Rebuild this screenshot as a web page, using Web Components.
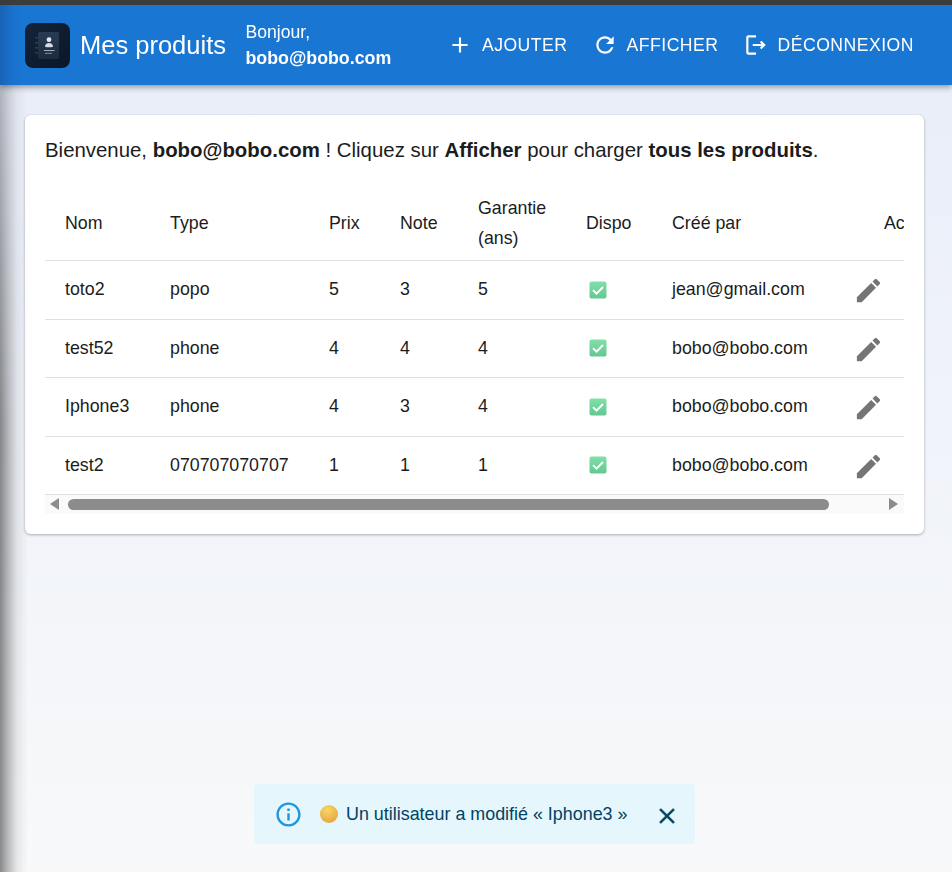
<!DOCTYPE html>
<html lang="fr">
<head>
<meta charset="utf-8">
<title>Mes produits</title>
<style>
  html, body { margin: 0; height: 100%; }
  body {
    overflow: hidden;
    font-family: "Liberation Sans", Arial, sans-serif;
    font-size: 17.6px;
    color: #1c1c1c;
    background: linear-gradient(180deg, #e8edf9 0%, #f8f9fa 100%);
  }
</style>
</head>
<body>
<side-shade></side-shade>
<app-bar>
  <nav-button icon="add">Ajouter</nav-button>
  <nav-button icon="refresh">Afficher</nav-button>
  <nav-button icon="logout">Déconnexion</nav-button>
</app-bar>
<page-main>
  <product-card>
    Bienvenue, <b>bobo@bobo.com</b> ! Cliquez sur <b>Afficher</b> pour charger <b>tous les produits</b>.
  </product-card>
</page-main>
<info-snackbar>Un utilisateur a modifié « Iphone3 »</info-snackbar>

<script>
const ICONS = {
  add: 'M19 13h-6v6h-2v-6H5v-2h6V5h2v6h6v2z',
  refresh: 'M17.65 6.35C16.2 4.9 14.21 4 12 4c-4.42 0-7.99 3.58-7.99 8s3.57 8 7.99 8c3.73 0 6.84-2.55 7.73-6h-2.08c-.82 2.33-3.04 4-5.65 4-3.31 0-6-2.69-6-6s2.69-6 6-6c1.66 0 3.14.69 4.22 1.78L13 11h7V4l-2.35 2.35z',
  logout: 'M17 8l-1.41 1.41L17.17 11H9v2h8.17l-1.58 1.58L17 16l4-4zM5 5h7V3H5c-1.1 0-2 .9-2 2v14c0 1.1.9 2 2 2h7v-2H5V5z',
  edit: 'M3 17.25V21h3.75L17.81 9.94l-3.75-3.75L3 17.25zM20.71 7.04c.39-.39.39-1.02 0-1.41l-2.34-2.34a.9959.9959 0 0 0-1.41 0l-1.83 1.83 3.75 3.75 1.83-1.83z',
  info: 'M11 7h2v2h-2zm0 4h2v6h-2zm1-9C6.48 2 2 6.48 2 12s4.48 10 10 10 10-4.48 10-10S17.52 2 12 2zm0 18c-4.41 0-8-3.59-8-8s3.59-8 8-8 8 3.59 8 8-3.59 8-8 8z',
  close: 'M19 6.41L17.59 5 12 10.59 6.41 5 5 6.41 10.59 12 5 17.59 6.41 19 12 13.41 17.59 19 19 17.59 13.41 12z'
};
const svgIcon = (name, size) =>
  `<svg width="${size}" height="${size}" viewBox="0 0 24 24" fill="currentColor"><path d="${ICONS[name]}"/></svg>`;

class SideShade extends HTMLElement {
  connectedCallback() {
    this.attachShadow({ mode: 'open' });
    this.shadowRoot.innerHTML = `
      <style>
        :host {
          position: fixed;
          top: 0;
          left: 0;
          bottom: 0;
          width: 28px;
          z-index: 5;
          pointer-events: none;
          background: linear-gradient(90deg, rgba(0,0,0,.45) 0, rgba(0,0,0,.25) 8px, rgba(0,0,0,.07) 17px, rgba(0,0,0,0) 28px);
          -webkit-mask-image: linear-gradient(180deg, rgba(0,0,0,.55) 85px, #000 420px);
          mask-image: linear-gradient(180deg, rgba(0,0,0,.55) 85px, #000 420px);
        }
      </style>`;
  }
}
customElements.define('side-shade', SideShade);

class AppBar extends HTMLElement {
  connectedCallback() {
    this.attachShadow({ mode: 'open' });
    this.shadowRoot.innerHTML = `
      <style>
        :host {
          display: block;
          position: relative;
          z-index: 10;
          border-top: 5px solid #3c3c3c;
          background: linear-gradient(90deg, #1763b4 0, #1970cb 10px, #1976d2 22px);
          color: #fff;
          box-shadow: 0 2px 4px -1px rgba(0,0,0,.2), 0 4px 5px rgba(0,0,0,.14), 0 1px 10px rgba(0,0,0,.12);
        }
        .bar {
          height: 80px;
          box-sizing: border-box;
          padding: 0 38px 0 25px;
          display: flex;
          align-items: center;
        }
        .logo { display: block; width: 45px; height: 45px; margin-top: 1px; }
        h1 {
          margin: 0 19.5px 0 10px;
          font-size: 25.5px;
          font-weight: 400;
          line-height: 32px;
        }
        .hello { font-size: 17.6px; line-height: 26px; margin-top: -1px; }
        .hello b { display: block; font-size: 17.8px; }
        .actions { margin-left: auto; display: flex; align-items: center; gap: 24px; }
      </style>
      <div class="bar">
        <svg class="logo" viewBox="0 0 45 45">
          <defs>
            <linearGradient id="lg" x1="0" y1="0" x2="1" y2="1">
              <stop offset="0" stop-color="#15243a"/>
              <stop offset="1" stop-color="#0b1727"/>
            </linearGradient>
            <linearGradient id="bk" x1="0" y1="0" x2="0" y2="1">
              <stop offset="0" stop-color="#2a3c54"/>
              <stop offset="1" stop-color="#1b2b40"/>
            </linearGradient>
          </defs>
          <rect width="45" height="45" rx="8" fill="url(#lg)"/>
          <rect x="13" y="9" width="21" height="27" rx="1.5" fill="url(#bk)"/>
          <g fill="#2c3c50"><rect x="10" y="14" width="3" height="1.500"/><rect x="10" y="19" width="3" height="1.500"/><rect x="10" y="24" width="3" height="1.500"/><rect x="10" y="29" width="3" height="1.500"/></g>
          <circle cx="24" cy="16.700" r="2.400" fill="#e2e7ee"/>
          <path d="M20 23.500c0-2.300 1.800-3.500 4-3.500s4 1.200 4 3.500c0 .5-1 .8-4 .8s-4-.3-4-.8z" fill="#d5dbe4"/>
          <rect x="19" y="27" width="10.500" height="1" fill="#a3afc0"/>
          <rect x="20" y="29.800" width="7" height="1" fill="#7e8da2"/>
        </svg>
        <h1>Mes produits</h1>
        <div class="hello">Bonjour,<b>bobo@bobo.com</b></div>
        <div class="actions"><slot></slot></div>
      </div>`;
  }
}
customElements.define('app-bar', AppBar);

class NavButton extends HTMLElement {
  connectedCallback() {
    this.attachShadow({ mode: 'open' });
    this.shadowRoot.innerHTML = `
      <style>
        :host {
          display: flex;
          align-items: center;
          gap: 9px;
          color: #fff;
          font-size: 17.6px;
          letter-spacing: .5px;
          text-transform: uppercase;
          line-height: 26px;
        }
        svg { display: block; }
      </style>
      ${svgIcon(this.getAttribute('icon'), 26)}<span><slot></slot></span>`;
  }
}
customElements.define('nav-button', NavButton);

class PageMain extends HTMLElement {
  connectedCallback() {
    this.attachShadow({ mode: 'open' });
    this.shadowRoot.innerHTML = `
      <style>
        :host { display: block; padding: 30px 28px 0 25px; }
      </style>
      <slot></slot>`;
  }
}
customElements.define('page-main', PageMain);

class ProductCard extends HTMLElement {
  connectedCallback() {
    this.attachShadow({ mode: 'open' });
    this.shadowRoot.innerHTML = `
      <style>
        :host {
          display: block;
          background: #fff;
          border-radius: 6px;
          padding: 20px;
          box-shadow: 0 1px 3px rgba(0,0,0,.3);
        }
        p { margin: 0 0 25px; font-size: 20.4px; line-height: 30px; }
      </style>
      <p><slot></slot></p>
      <product-table></product-table>
      <table-scrollbar></table-scrollbar>`;
  }
}
customElements.define('product-card', ProductCard);

const PRODUCTS = [
  ['toto2', 'popo', 5, 3, 5, 'jean@gmail.com'],
  ['test52', 'phone', 4, 4, 4, 'bobo@bobo.com'],
  ['Iphone3', 'phone', 4, 3, 4, 'bobo@bobo.com'],
  ['test2', '070707070707', 1, 1, 1, 'bobo@bobo.com']
];

class ProductTable extends HTMLElement {
  connectedCallback() {
    this.attachShadow({ mode: 'open' });
    const rows = PRODUCTS.map(p => `
      <tr>
        <td>${p[0]}</td><td>${p[1]}</td><td>${p[2]}</td><td>${p[3]}</td><td>${p[4]}</td>
        <td><svg class="ok" width="18" height="18" viewBox="0 0 18 18">
          <rect x=".5" y=".5" width="17" height="17" rx="2" fill="url(#okg)"/>
          <path d="M4 9.200l3.500 3.500 6.500-6.700" fill="none" stroke="#fff" stroke-width="1.900"/>
        </svg></td>
        <td>${p[5]}</td>
        <td class="act">${svgIcon('edit', 31)}</td>
      </tr>`).join('');
    this.shadowRoot.innerHTML = `
      <style>
        :host { display: block; overflow: hidden; }
        table {
          border-collapse: collapse;
          table-layout: fixed;
          width: 1000px;
          font-size: 17.8px;
        }
        th {
          font-weight: 400;
          text-align: left;
          height: 70px;
          line-height: 30px;
          padding: 0 20px 4px;
          box-sizing: border-box;
          border-bottom: 1px solid #e0e0e0;
        }
        td {
          height: 58px;
          padding: 0 20px;
          box-sizing: border-box;
          border-bottom: 1px solid #e0e0e0;
          white-space: nowrap;
        }
        tbody tr:nth-child(odd) td { height: 59px; }
        th.actions { padding-left: 52px; }
        td.act { padding: 0; color: #757575; }
        td.act svg { display: block; margin: 2px 0 0 21px; }
        .ok { display: block; margin: 0 0 0 2.500px; }
      </style>
      <svg width="0" height="0" style="position:absolute">
        <defs>
          <linearGradient id="okg" x1="0" y1="0" x2="0" y2="1">
            <stop offset="0" stop-color="#82dfa8"/>
            <stop offset="1" stop-color="#62c892"/>
          </linearGradient>
        </defs>
      </svg>
      <table>
        <colgroup>
          <col style="width:105px"><col style="width:159px"><col style="width:71px"><col style="width:78px">
          <col style="width:108px"><col style="width:86px"><col style="width:180px"><col style="width:213px">
        </colgroup>
        <thead><tr>
          <th>Nom</th><th>Type</th><th>Prix</th><th>Note</th><th>Garantie (ans)</th><th>Dispo</th><th>Créé par</th><th class="actions">Actions</th>
        </tr></thead>
        <tbody>${rows}</tbody>
      </table>`;
  }
}
customElements.define('product-table', ProductTable);

class TableScrollbar extends HTMLElement {
  connectedCallback() {
    this.attachShadow({ mode: 'open' });
    this.shadowRoot.innerHTML = `
      <style>
        :host {
          display: flex;
          align-items: center;
          height: 19px;
          padding: 0 6px 0 5px;
          background: #fafafa;
        }
        .arrow { width: 0; height: 0; border-top: 6px solid transparent; border-bottom: 6px solid transparent; }
        .left { border-right: 9px solid #8c8c8c; }
        .right { border-left: 9px solid #8c8c8c; margin-left: auto; }
        .thumb { width: 761px; height: 11px; margin-left: 9px; border-radius: 6px; background: #8c8c8c; }
      </style>
      <div class="arrow left"></div>
      <div class="thumb"></div>
      <div class="arrow right"></div>`;
  }
}
customElements.define('table-scrollbar', TableScrollbar);

class InfoSnackbar extends HTMLElement {
  connectedCallback() {
    this.attachShadow({ mode: 'open' });
    this.shadowRoot.innerHTML = `
      <style>
        :host {
          position: fixed;
          left: 254px;
          bottom: 28px;
          width: 441px;
          height: 60px;
          box-sizing: border-box;
          padding: 0 15px 0 20px;
          display: flex;
          align-items: center;
          border-radius: 4px;
          background: #e5f6fd;
          color: #014361;
          font-size: 17.9px;
        }
        .info { color: #1e96dc; display: block; margin-top: 1px; }
        .info svg { display: block; }
        .coin {
          width: 18px;
          height: 18px;
          margin: 0 8px 0 17px;
          border-radius: 50%;
          background: radial-gradient(circle at 42% 28%, #f9d768 0, #ecb548 55%, #dc9a58 100%);
        }
        .close { display: block; margin-left: auto; margin-top: 3px; }
        .close svg { display: block; stroke: currentColor; stroke-width: .4; }
      </style>
      <span class="info">${svgIcon('info', 29)}</span>
      <span class="coin"></span>
      <span><slot></slot></span>
      <span class="close">${svgIcon('close', 26)}</span>`;
  }
}
customElements.define('info-snackbar', InfoSnackbar);
</script>
</body>
</html>
